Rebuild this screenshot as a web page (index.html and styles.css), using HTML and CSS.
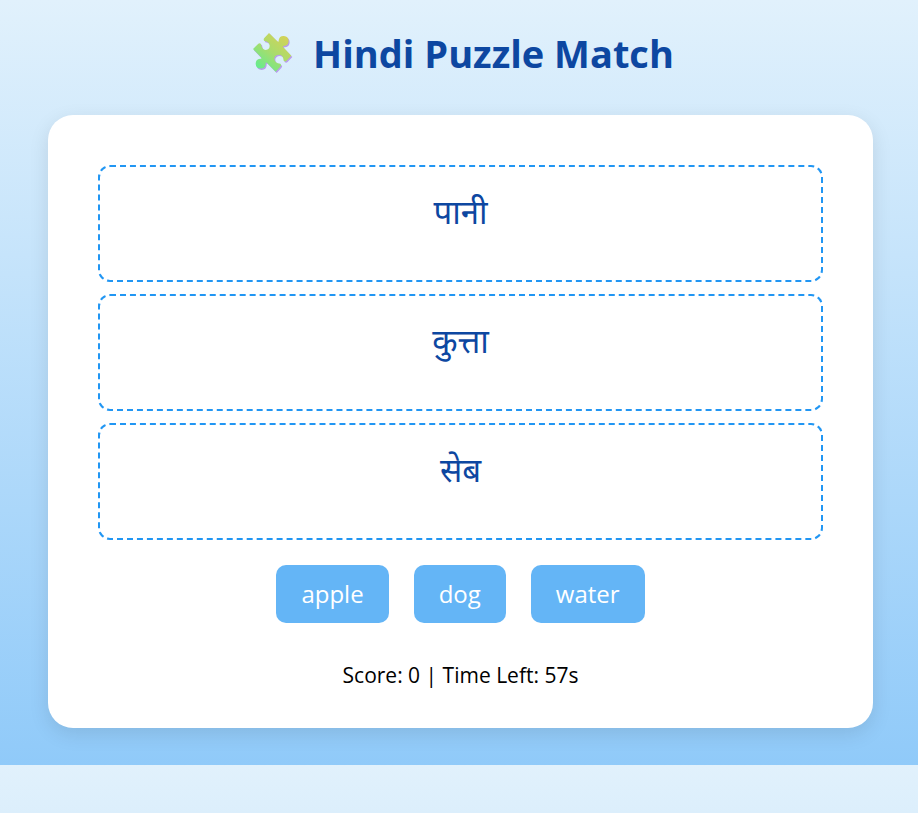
FILE: index.html
```html
<!DOCTYPE html>
<html lang="en">
<head>
<meta charset="utf-8">
<meta name="viewport" content="width=device-width, initial-scale=1">
<title>Hindi Puzzle Match</title>
<link rel="stylesheet" href="styles.css">
</head>
<body>
<h1 class="title">
  <svg class="title-icon" viewBox="42 42 120 120" aria-hidden="true">
    <defs>
      <linearGradient id="piece-fill" gradientUnits="userSpaceOnUse" x1="60" y1="145" x2="135" y2="50">
        <stop offset="0" stop-color="#69eb8c"/>
        <stop offset="0.5" stop-color="#a9dc6c"/>
        <stop offset="1" stop-color="#d2d259"/>
      </linearGradient>
      <path id="piece" d="M90 42 L115 67 Q120 71 119 64 A15 15 0 1 1 135 81 Q129 81 133 85 L157 110 L142 126 Q138 129 134 125 Q133 107 120 107 Q106 108 106 119 Q107 132 124 134 Q129 138 124 143 L110 158 L84 132 Q79 128 80 135 A15 15 0 1 1 63 119 Q70 119 66 115 L42 90 L58 74 Q62 71 66 75 Q68 92 80 93 Q92 91 92 80 Q91 68 76 66 Q72 62 76 57 Z"/>
    </defs>
    <use href="#piece" x="3" y="4" fill="#b99bee"/>
    <use href="#piece" fill="url(#piece-fill)"/>
  </svg>
  <span>Hindi Puzzle Match</span>
</h1>
<main class="card">
  <div class="slots">
    <div class="slot" lang="hi">पानी</div>
    <div class="slot" lang="hi">कुत्ता</div>
    <div class="slot" lang="hi">सेब</div>
  </div>
  <div class="words">
    <button class="word" type="button">apple</button>
    <button class="word" type="button">dog</button>
    <button class="word" type="button">water</button>
  </div>
  <p class="status">Score: 0 | Time Left: 57s</p>
</main>
</body>
</html>
```
FILE: styles.css
```css
* {
  box-sizing: border-box;
}

body {
  margin: 0;
  padding: 25px 45px 37px 48px;
  background: linear-gradient(to bottom, #e1f1fc, #90caf9);
  font-family: "Segoe UI", "Open Sans", "Noto Sans", sans-serif;
  color: #000;
}

.title {
  display: flex;
  align-items: center;
  justify-content: center;
  gap: 20px;
  margin: 0 0 34px;
  padding-left: 6px;
  font-size: 38px;
  font-weight: 700;
  line-height: 56px;
  color: #0d47a1;
}

.title-icon {
  width: 40px;
  height: 40px;
  overflow: visible;
}

.card {
  padding: 50px 50px 36px;
  border-radius: 25px;
  background: #fff;
  box-shadow: 0 6px 20px rgba(0, 0, 0, 0.1);
}

.slots {
  display: grid;
  gap: 12px;
}

.slot {
  min-height: 117px;
  padding: 21px;
  border: 2px dashed #2196f3;
  border-radius: 12px;
  font-size: 33px;
  line-height: 48px;
  text-align: center;
  color: #0d47a1;
}

.words {
  display: flex;
  flex-wrap: wrap;
  justify-content: center;
  gap: 25px;
  margin-top: 25px;
}

.word {
  padding: 12px 25px;
  border: 0;
  border-radius: 10px;
  background: #64b5f6;
  font: inherit;
  font-size: 24px;
  line-height: 34px;
  color: #fff;
  cursor: pointer;
}

.status {
  margin: 35px 0 0;
  font-size: 21px;
  line-height: 34px;
  text-align: center;
}
```
